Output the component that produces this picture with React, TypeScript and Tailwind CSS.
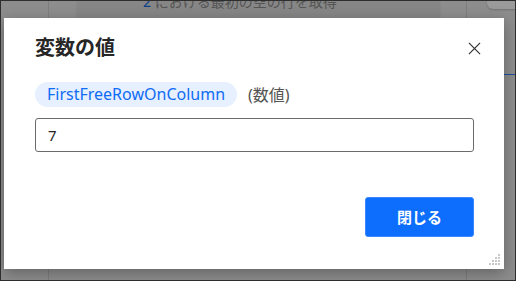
import React from "react";

const jp = "font-['Noto_Sans','Noto_Sans_CJK_JP',sans-serif]";

function CloseIcon(props: any) {
  return (
    <svg {...props} viewBox="0 0 14 14" fill="none" stroke="currentColor" strokeWidth="1.3">
      <path d="M1 1l12 12M13 1L1 13" />
    </svg>
  );
}

function Grip() {
  return (
    <svg width="13" height="13" viewBox="0 0 13 13" fill="#c8c8c8">
      <rect x="10" y="1" width="2" height="2" />
      <rect x="7" y="4" width="2" height="2" />
      <rect x="10" y="4" width="2" height="2" />
      <rect x="4" y="7" width="2" height="2" />
      <rect x="7" y="7" width="2" height="2" />
      <rect x="10" y="7" width="2" height="2" />
      <rect x="1" y="10" width="2" height="2" />
      <rect x="4" y="10" width="2" height="2" />
      <rect x="7" y="10" width="2" height="2" />
      <rect x="10" y="10" width="2" height="2" />
    </svg>
  );
}

export default function App() {
  return (
    <div className={`relative w-[516px] h-[281px] overflow-hidden border border-[#2e2e2e] bg-[#8d8d8d] ${jp}`}>
      {/* page behind the dialog */}
      <div className="absolute left-[47px] top-0 h-full w-px bg-[#7e7e7e]" />
      <div className="absolute left-[465px] top-0 h-full w-px bg-[#7e7e7e]" />
      <div className="absolute left-[77px] top-0 w-[361px] h-[17px] bg-[#868686] shadow-[0_1px_3px_rgba(0,0,0,0.15)] overflow-hidden">
        <div className="absolute left-[65px] top-[-8px] text-[14px] text-[#555] whitespace-nowrap leading-[18px]">
          <span className="text-[#0b3f8a]">2</span> における最初の空の行を取得
        </div>
      </div>
      <div className="absolute left-[486px] top-[-10px] w-[40px] h-[18px] rounded-[6px] bg-[#9a9a9a] shadow-[0_1px_2px_rgba(0,0,0,0.2)]" />
      <div className="absolute left-[503px] top-[73px] w-[14px] h-px bg-[#1f4fa0]" />

      {/* dialog */}
      <div className="absolute left-[3px] top-[17px] w-[500px] h-[251px] bg-white shadow-[0_4px_14px_rgba(0,0,0,0.3)] px-[31px] pt-[17px] flex flex-col">
        <div className="flex items-center justify-between h-[26px]">
          <h1 className="text-[20px] font-bold text-[#262626] leading-none">変数の値</h1>
          <CloseIcon className="w-[13px] h-[13px] text-[#333] mr-[-8px]" />
        </div>
        <div className="flex items-center gap-[11px] mt-[21px]">
          <span className="h-[25px] px-[12px] rounded-full bg-[#e6f0ff] text-[#0f6cf5] text-[16px] leading-[25px] whitespace-nowrap">
            FirstFreeRowOnColumn
          </span>
          <span className="text-[16px] text-[#555]">(数値)</span>
        </div>
        <div className="mt-[11px] h-[34px] w-[439px] border border-[#6b6b6b] rounded-[3px] flex items-center px-[12px] text-[15px] text-[#262626]">
          7
        </div>
        <div className="flex justify-end mt-[45px] w-[439px]">
          <button className="w-[109px] h-[40px] rounded-[3px] bg-[#0d6efd] border border-[#3a86ff] text-white text-[15px] font-bold">
            閉じる
          </button>
        </div>
        <div className="absolute right-[3px] bottom-[3px]">
          <Grip />
        </div>
      </div>
    </div>
  );
}
